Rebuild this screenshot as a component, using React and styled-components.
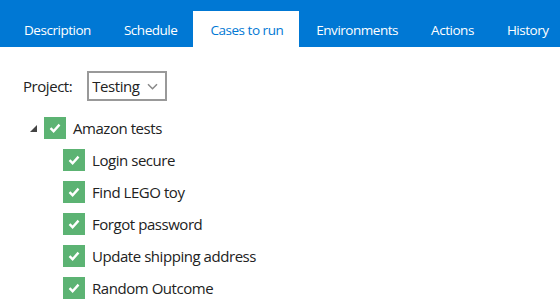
import React from "react";
import styled, { createGlobalStyle } from "styled-components";

const Global = createGlobalStyle`
  html, body { margin: 0; padding: 0; background: #fff; }
  body { font-family: "Open Sans", "Noto Sans", sans-serif; color: #222; }
`;

const Page = styled.div`
  width: 560px;
  height: 306px;
  overflow: hidden;
  background: #fff;
`;

const TabBar = styled.div`
  display: flex;
  align-items: flex-end;
  height: 47px;
  background: #0078d4;
  padding-left: 7px;
`;

const Tab = styled.div`
  height: 36px;
  display: flex;
  align-items: center;
  padding: 1px 16px 0 17px;
  box-sizing: border-box;
  font-size: 13.5px;
  letter-spacing: -0.47px;
  white-space: nowrap;
  color: ${(p) => (p.$active ? "#0078d4" : "#fff")};
  background: ${(p) => (p.$active ? "#fff" : "transparent")};
`;

const Body = styled.div`
  padding: 24px 0 0 23px;
  font-size: 15px;
`;

const ProjectRow = styled.div`
  display: flex;
  align-items: center;
  gap: 15px;
`;

const Select = styled.div`
  box-sizing: border-box;
  width: 80px;
  height: 30px;
  border: 2px solid #999;
  display: flex;
  align-items: center;
  justify-content: space-between;
  padding: 0 7px 0 3px;
`;

const Tree = styled.div`
  margin-top: 16px;
  display: flex;
  flex-direction: column;
  gap: 10px;
`;

const Node = styled.div`
  display: flex;
  align-items: center;
  height: 22px;
  padding-left: ${(p) => p.$indent}px;
`;

const Toggle = styled.div`
  width: 21px;
  display: flex;
  align-items: center;
  padding-left: 7px;
  box-sizing: border-box;
`;

const Box = styled.div`
  width: 22px;
  height: 22px;
  background: #5cb373;
  display: flex;
  align-items: center;
  justify-content: center;
  margin-right: 7px;
  flex-shrink: 0;
`;

const Label = styled.span`
  font-size: 15px;
  letter-spacing: -0.45px;
  white-space: nowrap;
`;

const Check = () => (
  <svg width="12" height="10" viewBox="0 0 12 10">
    <path d="M1.5 5.2 L4.6 8.2 L10.5 1.6" fill="none" stroke="#fff" strokeWidth="2.4" />
  </svg>
);

const Chevron = () => (
  <svg width="11" height="7" viewBox="0 0 11 7">
    <path d="M1 1.2 L5.5 5.7 L10 1.2" fill="none" stroke="#888" strokeWidth="1.5" />
  </svg>
);

const Triangle = () => (
  <svg width="7" height="7" viewBox="0 0 7 7">
    <path d="M7 0 L7 7 L0 7 Z" fill="#444" />
  </svg>
);

const tabs = ["Description", "Schedule", "Cases to run", "Environments", "Actions", "History"];
const cases = ["Login secure", "Find LEGO toy", "Forgot password", "Update shipping address", "Random Outcome"];

export default function App() {
  return (
    <Page>
      <Global />
      <TabBar>
        {tabs.map((t) => (
          <Tab key={t} $active={t === "Cases to run"}>{t}</Tab>
        ))}
      </TabBar>
      <Body>
        <ProjectRow>
          <Label>Project:</Label>
          <Select>
            <Label>Testing</Label>
            <Chevron />
          </Select>
        </ProjectRow>
        <Tree>
          <Node $indent={0}>
            <Toggle><Triangle /></Toggle>
            <Box><Check /></Box>
            <Label>Amazon tests</Label>
          </Node>
          {cases.map((c) => (
            <Node key={c} $indent={40}>
              <Box><Check /></Box>
              <Label>{c}</Label>
            </Node>
          ))}
        </Tree>
      </Body>
    </Page>
  );
}
